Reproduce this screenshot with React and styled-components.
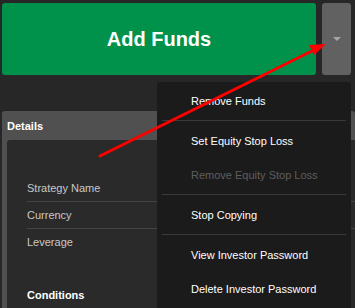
import React from "react";
import styled, { createGlobalStyle } from "styled-components";

const Global = createGlobalStyle`
  html, body { margin: 0; padding: 0; background: #272727; overflow: hidden; }
  body { font-family: "Liberation Sans", Arial, sans-serif; }
`;

const Page = styled.div`
  position: relative;
  width: 355px;
  height: 308px;
  overflow: hidden;
  background: #272727;
`;

const TopRow = styled.div`
  display: flex;
  gap: 6px;
  padding: 3px 4px 0 2px;
`;

const AddButton = styled.div`
  flex: 0 0 314px;
  height: 72px;
  background: #00914a;
  border-radius: 3px;
  display: flex;
  align-items: center;
  justify-content: center;
  color: #fff;
  font-weight: bold;
  font-size: 20px;
`;

const CaretButton = styled.div`
  flex: 0 0 29px;
  height: 72px;
  background: #616161;
  border-radius: 3px;
  display: flex;
  align-items: center;
  justify-content: center;
`;

const Caret = styled.div`
  width: 0;
  height: 0;
  border-left: 4px solid transparent;
  border-right: 4px solid transparent;
  border-top: 4px solid #a6a6a6;
`;

const Panel = styled.div`
  margin: 36px 0 0 2px;
  background: #505050;
  border-radius: 3px 3px 0 0;
  padding-left: 5px;
`;

const PanelHeader = styled.div`
  height: 29px;
  display: flex;
  align-items: center;
  color: #fff;
  font-weight: bold;
  font-size: 11px;
`;

const PanelBody = styled.div`
  background: #2a2a2a;
  border-radius: 3px 0 0 0;
  padding: 35px 0 20px 20px;
  height: 200px;
`;

const Row = styled.div`
  height: 26px;
  display: flex;
  align-items: center;
  color: #c8c8c8;
  font-size: 11px;
  border-bottom: ${(p) => (p.$last ? "none" : "1px solid #444")};
`;

const SectionTitle = styled.div`
  margin-top: 34px;
  color: #fff;
  font-weight: bold;
  font-size: 11px;
`;

const Menu = styled.div`
  position: absolute;
  left: 157px;
  top: 82px;
  width: 194px;
  height: 240px;
  background: #1b1b1b;
  border-radius: 3px;
  padding-top: 2px;
`;

const MenuItem = styled.div`
  height: 34px;
  display: flex;
  align-items: center;
  padding-left: 34px;
  font-size: 11px;
  color: ${(p) => (p.$disabled ? "#5e5e5e" : "#fff")};
`;

const Divider = styled.div`
  height: 1px;
  margin: 2px 5px 3px;
  background: #3a3a3a;
`;

const Overlay = styled.svg`
  position: absolute;
  left: 0;
  top: 0;
  pointer-events: none;
`;

export default function App() {
  return (
    <Page>
      <Global />
      <TopRow>
        <AddButton>Add Funds</AddButton>
        <CaretButton>
          <Caret />
        </CaretButton>
      </TopRow>
      <Panel>
        <PanelHeader>Details</PanelHeader>
        <PanelBody>
          <Row>Strategy Name</Row>
          <Row>Currency</Row>
          <Row $last>Leverage</Row>
          <SectionTitle>Conditions</SectionTitle>
        </PanelBody>
      </Panel>
      <Menu>
        <MenuItem>Remove Funds</MenuItem>
        <Divider />
        <MenuItem>Set Equity Stop Loss</MenuItem>
        <MenuItem $disabled>Remove Equity Stop Loss</MenuItem>
        <Divider />
        <MenuItem>Stop Copying</MenuItem>
        <Divider />
        <MenuItem>View Investor Password</MenuItem>
        <MenuItem>Delete Investor Password</MenuItem>
      </Menu>
      <Overlay width="355" height="308" viewBox="0 0 355 308">
        <line x1="100" y1="156" x2="318" y2="48" stroke="#ff0000" strokeWidth="3" strokeLinecap="round" />
        <polygon points="326,44 309,45 314,55" fill="#ff0000" />
      </Overlay>
    </Page>
  );
}
